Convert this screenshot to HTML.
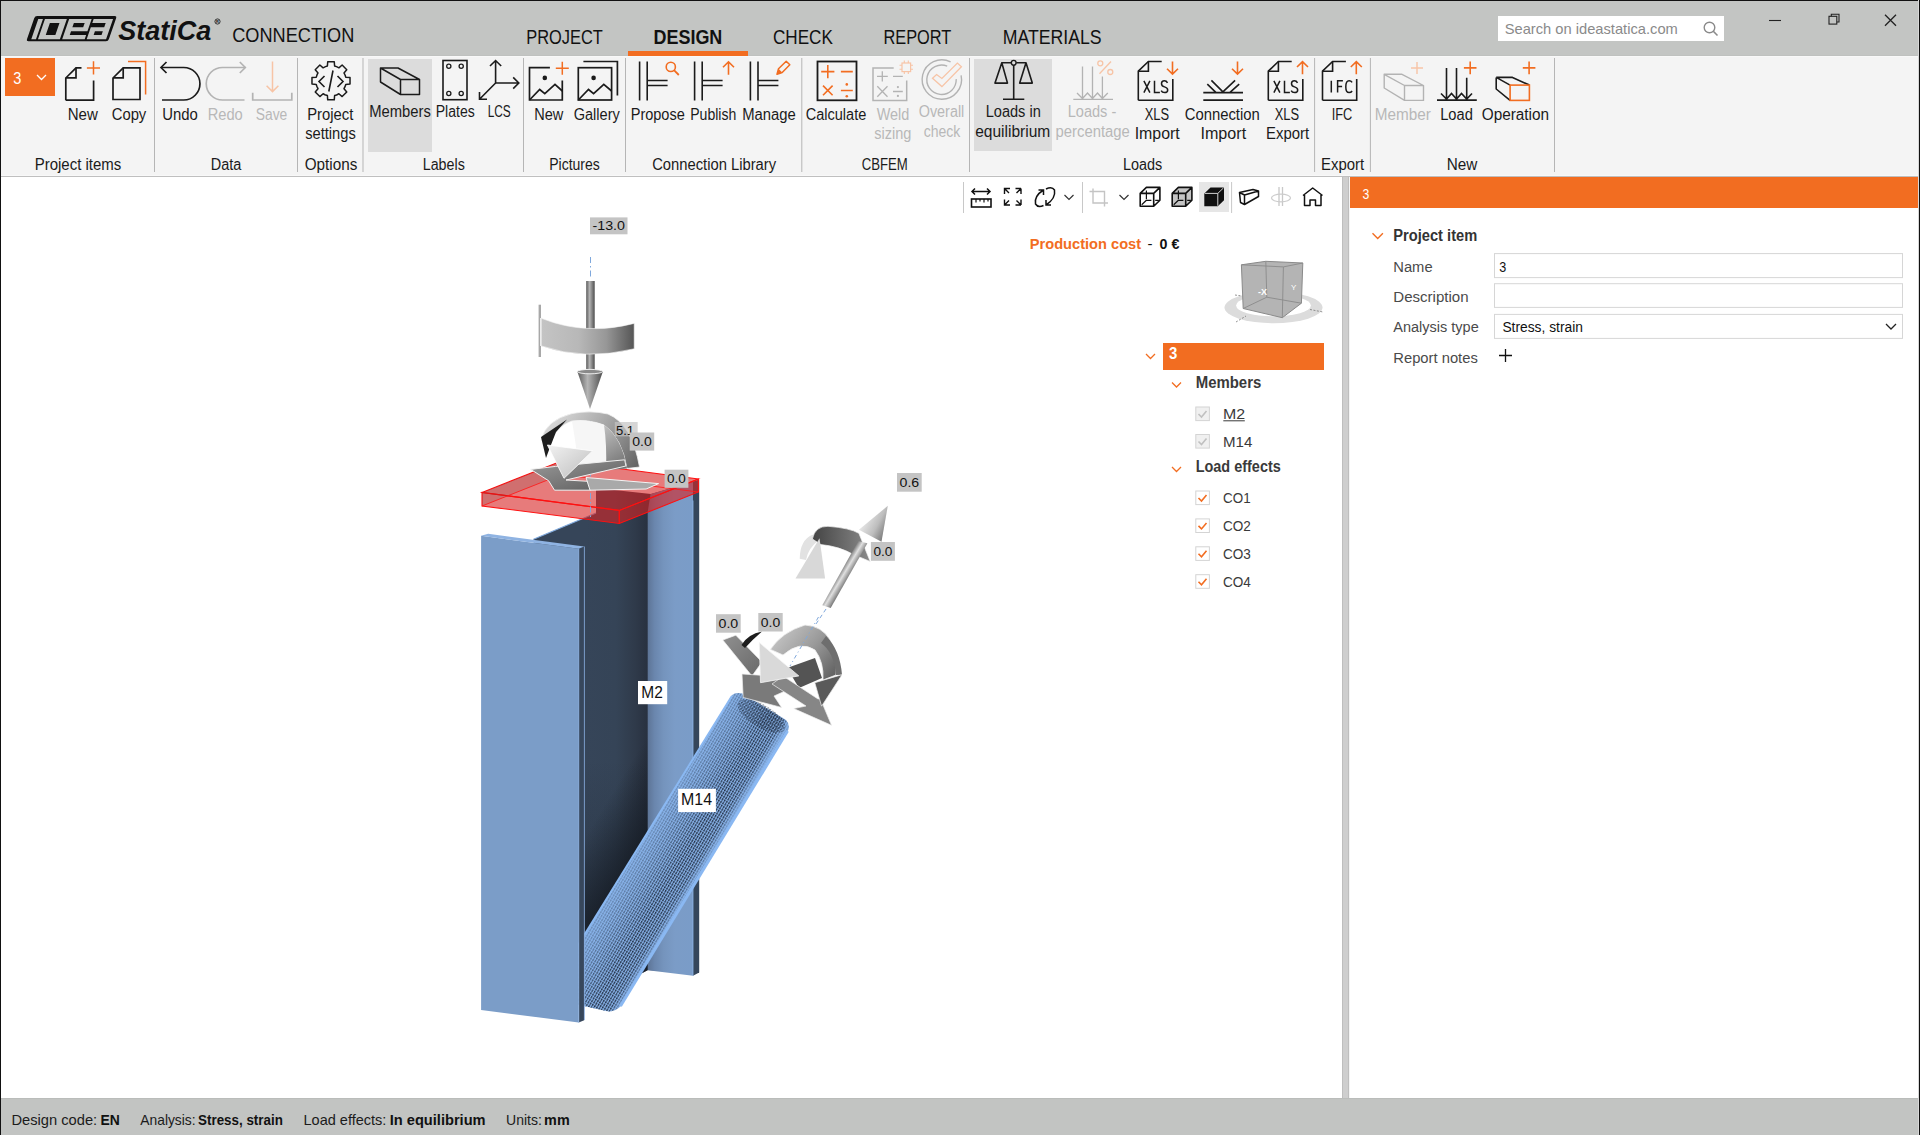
<!DOCTYPE html>
<html><head><meta charset="utf-8"><title>IDEA StatiCa Connection</title>
<style>
html,body{margin:0;padding:0;width:1920px;height:1135px;overflow:hidden;background:#fff}
svg{display:block;font-family:"Liberation Sans", sans-serif}
</style></head><body>
<svg width="1920" height="1135" viewBox="0 0 1920 1135">
<rect x="0" y="0" width="1920" height="1135" fill="#ffffff" />
<rect x="0" y="0" width="1920" height="56" fill="#c3c5c3" />
<rect x="0" y="55" width="1920" height="1" fill="#bfc1bf" />
<rect x="0" y="56" width="1920" height="1" fill="#f8f8f8" />
<rect x="0" y="57" width="1920" height="118" fill="#f4f4f4" />
<rect x="0" y="175" width="1920" height="1" fill="#f8f8f8" />
<rect x="0" y="176" width="1920" height="1" fill="#bfbfbf" />
<rect x="1342" y="177" width="1" height="921" fill="#bebebe" />
<rect x="1343" y="177" width="5" height="921" fill="#cecece" />
<rect x="1348" y="177" width="1" height="921" fill="#bebebe" />
<rect x="1349" y="177" width="1" height="921" fill="#f4f4f4" />
<rect x="0" y="1098" width="1920" height="37" fill="#c2c4c2" />
<rect x="0" y="1098" width="1920" height="1" fill="#babcba" />
<g transform="translate(14.17,0) skewX(-19)"><rect x="26.3" y="16" width="81.9" height="25.2" rx="2.2" fill="#111"/><path fill="#c3c5c3" fill-rule="evenodd" d="M30.6,18.9 H35.3 V39.2 H30.6 Z M37.3,18.9 H59.2 V39.2 H37.3 Z M43.6,22.9 V34.9 H53.2 V22.9 Z M61.5,18.9 H84 V31.2 H67.6 V34.9 H84 V39.2 H61.5 Z M67.6,22.9 V27.3 H78.4 V22.9 Z M86,18.9 H105.4 V39.2 H86 V27.2 H99.4 V22.9 H86 Z M91.5,31.2 V34.9 H99.4 V31.2 Z"/></g>
<text x="118.2" y="39.5" font-size="27" font-weight="bold" fill="#111" textLength="93.1" lengthAdjust="spacingAndGlyphs" font-style="italic">StatiCa</text>
<circle cx="217.5" cy="21.5" r="2.6" fill="none" stroke="#111" stroke-width="0.8"/>
<text x="216.1" y="23.2" font-size="4" fill="#111" font-weight="bold">R</text>
<text x="232.2" y="41.5" font-size="20" font-weight="normal" fill="#111" textLength="122.1" lengthAdjust="spacingAndGlyphs" >CONNECTION</text>
<text x="526.2" y="44.0" font-size="20" font-weight="normal" fill="#111" textLength="76.6" lengthAdjust="spacingAndGlyphs" >PROJECT</text>
<text x="653.5" y="44.0" font-size="20" font-weight="bold" fill="#111" textLength="68.8" lengthAdjust="spacingAndGlyphs" >DESIGN</text>
<text x="773.0" y="44.0" font-size="20" font-weight="normal" fill="#111" textLength="59.8" lengthAdjust="spacingAndGlyphs" >CHECK</text>
<text x="883.5" y="44.0" font-size="20" font-weight="normal" fill="#111" textLength="67.8" lengthAdjust="spacingAndGlyphs" >REPORT</text>
<text x="1002.7" y="44.0" font-size="20" font-weight="normal" fill="#111" textLength="98.9" lengthAdjust="spacingAndGlyphs" >MATERIALS</text>
<rect x="628" y="51" width="120" height="5" fill="#f26d21" />
<rect x="1498" y="16" width="226" height="25" fill="#ffffff" />
<text x="1504.7" y="33.5" font-size="15" font-weight="normal" fill="#8a8a8a" textLength="173.1" lengthAdjust="spacingAndGlyphs" >Search on ideastatica.com</text>
<circle cx="1709.5" cy="27.5" r="5.3" fill="none" stroke="#8a8a8a" stroke-width="1.4"/>
<line x1="1713.3" y1="31.3" x2="1717.5" y2="35.5" stroke="#8a8a8a" stroke-width="1.6"/>
<line x1="1769" y1="20.5" x2="1781" y2="20.5" stroke="#222" stroke-width="1.1"/>
<rect x="1829" y="16.3" width="7.8" height="7.8" fill="none" stroke="#222" stroke-width="1.1"/>
<path d="M1831.3,16.3 V14.3 H1839 V22 H1836.8" fill="none" stroke="#222" stroke-width="1.1"/>
<path d="M1885,14.8 L1896,25.8 M1896,14.8 L1885,25.8" stroke="#222" stroke-width="1.3"/>
<text x="11.4" y="1124.7" font-size="15" font-weight="normal" fill="#1b1b1b" textLength="85.8" lengthAdjust="spacingAndGlyphs" >Design code:</text>
<text x="100.5" y="1124.7" font-size="15" font-weight="bold" fill="#111" textLength="19.3" lengthAdjust="spacingAndGlyphs" >EN</text>
<text x="140.3" y="1124.7" font-size="15" font-weight="normal" fill="#1b1b1b" textLength="55.3" lengthAdjust="spacingAndGlyphs" >Analysis:</text>
<text x="198.1" y="1124.7" font-size="15" font-weight="bold" fill="#111" textLength="84.7" lengthAdjust="spacingAndGlyphs" >Stress, strain</text>
<text x="303.5" y="1124.7" font-size="15" font-weight="normal" fill="#1b1b1b" textLength="82.9" lengthAdjust="spacingAndGlyphs" >Load effects:</text>
<text x="389.7" y="1124.7" font-size="15" font-weight="bold" fill="#111" textLength="95.9" lengthAdjust="spacingAndGlyphs" >In equilibrium</text>
<text x="506.1" y="1124.7" font-size="15" font-weight="normal" fill="#1b1b1b" textLength="35.8" lengthAdjust="spacingAndGlyphs" >Units:</text>
<text x="544.1" y="1124.7" font-size="15" font-weight="bold" fill="#111" textLength="25.6" lengthAdjust="spacingAndGlyphs" >mm</text>
<rect x="5" y="58" width="50" height="38" fill="#f26d21" />
<text x="13.2" y="83.5" font-size="16" font-weight="normal" fill="#ffffff" textLength="8.1" lengthAdjust="spacingAndGlyphs" >3</text>
<path d="M37,75 L41.5,79.5 L46,75" stroke="#ffffff" stroke-width="1.3" fill="none" />
<rect x="368" y="59" width="64" height="93" fill="#dcdcdc" />
<rect x="974" y="59" width="78" height="92" fill="#dcdcdc" />
<line x1="154.5" y1="58" x2="154.5" y2="172" stroke="#b5b5b5" stroke-width="1"/>
<line x1="297.5" y1="58" x2="297.5" y2="172" stroke="#b5b5b5" stroke-width="1"/>
<line x1="363" y1="58" x2="363" y2="172" stroke="#b5b5b5" stroke-width="1"/>
<line x1="523.5" y1="58" x2="523.5" y2="172" stroke="#b5b5b5" stroke-width="1"/>
<line x1="625.5" y1="58" x2="625.5" y2="172" stroke="#b5b5b5" stroke-width="1"/>
<line x1="801.8" y1="58" x2="801.8" y2="172" stroke="#b5b5b5" stroke-width="1"/>
<line x1="969.5" y1="58" x2="969.5" y2="172" stroke="#b5b5b5" stroke-width="1"/>
<line x1="1314.6" y1="58" x2="1314.6" y2="172" stroke="#b5b5b5" stroke-width="1"/>
<line x1="1370.4" y1="58" x2="1370.4" y2="172" stroke="#b5b5b5" stroke-width="1"/>
<line x1="1554.5" y1="58" x2="1554.5" y2="172" stroke="#b5b5b5" stroke-width="1"/>
<text x="34.7" y="170.2" font-size="16" font-weight="normal" fill="#1b1b1b" textLength="86.6" lengthAdjust="spacingAndGlyphs" >Project items</text>
<text x="210.7" y="170.2" font-size="16" font-weight="normal" fill="#1b1b1b" textLength="30.6" lengthAdjust="spacingAndGlyphs" >Data</text>
<text x="304.7" y="170.2" font-size="16" font-weight="normal" fill="#1b1b1b" textLength="52.6" lengthAdjust="spacingAndGlyphs" >Options</text>
<text x="422.7" y="170.2" font-size="16" font-weight="normal" fill="#1b1b1b" textLength="42.1" lengthAdjust="spacingAndGlyphs" >Labels</text>
<text x="549.2" y="170.2" font-size="16" font-weight="normal" fill="#1b1b1b" textLength="50.6" lengthAdjust="spacingAndGlyphs" >Pictures</text>
<text x="652.2" y="170.2" font-size="16" font-weight="normal" fill="#1b1b1b" textLength="123.9" lengthAdjust="spacingAndGlyphs" >Connection Library</text>
<text x="861.7" y="170.2" font-size="16" font-weight="normal" fill="#1b1b1b" textLength="46.1" lengthAdjust="spacingAndGlyphs" >CBFEM</text>
<text x="1123.0" y="170.2" font-size="16" font-weight="normal" fill="#1b1b1b" textLength="39.3" lengthAdjust="spacingAndGlyphs" >Loads</text>
<text x="1321.0" y="170.2" font-size="16" font-weight="normal" fill="#1b1b1b" textLength="43.1" lengthAdjust="spacingAndGlyphs" >Export</text>
<text x="1446.7" y="170.2" font-size="16" font-weight="normal" fill="#1b1b1b" textLength="30.6" lengthAdjust="spacingAndGlyphs" >New</text>
<text x="67.7" y="119.5" font-size="16" font-weight="normal" fill="#1b1b1b" textLength="30.1" lengthAdjust="spacingAndGlyphs" >New</text>
<text x="111.7" y="119.5" font-size="16" font-weight="normal" fill="#1b1b1b" textLength="34.6" lengthAdjust="spacingAndGlyphs" >Copy</text>
<text x="162.2" y="119.5" font-size="16" font-weight="normal" fill="#1b1b1b" textLength="35.6" lengthAdjust="spacingAndGlyphs" >Undo</text>
<text x="207.7" y="119.5" font-size="16" font-weight="normal" fill="#b8b8b8" textLength="35.1" lengthAdjust="spacingAndGlyphs" >Redo</text>
<text x="255.7" y="119.5" font-size="16" font-weight="normal" fill="#b8b8b8" textLength="31.6" lengthAdjust="spacingAndGlyphs" >Save</text>
<text x="307.2" y="119.5" font-size="16" font-weight="normal" fill="#1b1b1b" textLength="46.1" lengthAdjust="spacingAndGlyphs" >Project</text>
<text x="305.2" y="139.2" font-size="16" font-weight="normal" fill="#1b1b1b" textLength="50.6" lengthAdjust="spacingAndGlyphs" >settings</text>
<text x="369.2" y="117.2" font-size="16" font-weight="normal" fill="#1b1b1b" textLength="61.6" lengthAdjust="spacingAndGlyphs" >Members</text>
<text x="435.7" y="117.2" font-size="16" font-weight="normal" fill="#1b1b1b" textLength="39.1" lengthAdjust="spacingAndGlyphs" >Plates</text>
<text x="487.7" y="117.2" font-size="16" font-weight="normal" fill="#1b1b1b" textLength="23.1" lengthAdjust="spacingAndGlyphs" >LCS</text>
<text x="534.2" y="119.5" font-size="16" font-weight="normal" fill="#1b1b1b" textLength="29.1" lengthAdjust="spacingAndGlyphs" >New</text>
<text x="573.7" y="119.5" font-size="16" font-weight="normal" fill="#1b1b1b" textLength="46.1" lengthAdjust="spacingAndGlyphs" >Gallery</text>
<text x="630.7" y="119.5" font-size="16" font-weight="normal" fill="#1b1b1b" textLength="54.1" lengthAdjust="spacingAndGlyphs" >Propose</text>
<text x="690.2" y="119.5" font-size="16" font-weight="normal" fill="#1b1b1b" textLength="46.1" lengthAdjust="spacingAndGlyphs" >Publish</text>
<text x="742.2" y="119.5" font-size="16" font-weight="normal" fill="#1b1b1b" textLength="53.6" lengthAdjust="spacingAndGlyphs" >Manage</text>
<text x="805.7" y="119.5" font-size="16" font-weight="normal" fill="#1b1b1b" textLength="60.6" lengthAdjust="spacingAndGlyphs" >Calculate</text>
<text x="876.7" y="119.5" font-size="16" font-weight="normal" fill="#b8b8b8" textLength="32.6" lengthAdjust="spacingAndGlyphs" >Weld</text>
<text x="874.2" y="139.2" font-size="16" font-weight="normal" fill="#b8b8b8" textLength="37.1" lengthAdjust="spacingAndGlyphs" >sizing</text>
<text x="918.7" y="117.2" font-size="16" font-weight="normal" fill="#b8b8b8" textLength="45.6" lengthAdjust="spacingAndGlyphs" >Overall</text>
<text x="923.7" y="136.5" font-size="16" font-weight="normal" fill="#b8b8b8" textLength="36.6" lengthAdjust="spacingAndGlyphs" >check</text>
<text x="985.7" y="117.2" font-size="16" font-weight="normal" fill="#1b1b1b" textLength="55.1" lengthAdjust="spacingAndGlyphs" >Loads in</text>
<text x="975.2" y="136.5" font-size="16" font-weight="normal" fill="#1b1b1b" textLength="75.1" lengthAdjust="spacingAndGlyphs" >equilibrium</text>
<text x="1067.7" y="117.2" font-size="16" font-weight="normal" fill="#b8b8b8" textLength="48.6" lengthAdjust="spacingAndGlyphs" >Loads -</text>
<text x="1055.5" y="136.5" font-size="16" font-weight="normal" fill="#b8b8b8" textLength="74.3" lengthAdjust="spacingAndGlyphs" >percentage</text>
<text x="1144.7" y="119.5" font-size="16" font-weight="normal" fill="#1b1b1b" textLength="24.4" lengthAdjust="spacingAndGlyphs" >XLS</text>
<text x="1134.7" y="139.2" font-size="16" font-weight="normal" fill="#1b1b1b" textLength="45.1" lengthAdjust="spacingAndGlyphs" >Import</text>
<text x="1184.7" y="119.5" font-size="16" font-weight="normal" fill="#1b1b1b" textLength="75.1" lengthAdjust="spacingAndGlyphs" >Connection</text>
<text x="1200.5" y="139.2" font-size="16" font-weight="normal" fill="#1b1b1b" textLength="45.6" lengthAdjust="spacingAndGlyphs" >Import</text>
<text x="1274.7" y="119.5" font-size="16" font-weight="normal" fill="#1b1b1b" textLength="24.4" lengthAdjust="spacingAndGlyphs" >XLS</text>
<text x="1266.0" y="139.2" font-size="16" font-weight="normal" fill="#1b1b1b" textLength="43.1" lengthAdjust="spacingAndGlyphs" >Export</text>
<text x="1331.7" y="119.5" font-size="16" font-weight="normal" fill="#1b1b1b" textLength="20.6" lengthAdjust="spacingAndGlyphs" >IFC</text>
<text x="1374.7" y="119.5" font-size="16" font-weight="normal" fill="#b8b8b8" textLength="56.1" lengthAdjust="spacingAndGlyphs" >Member</text>
<text x="1440.2" y="119.5" font-size="16" font-weight="normal" fill="#1b1b1b" textLength="32.6" lengthAdjust="spacingAndGlyphs" >Load</text>
<text x="1481.7" y="119.5" font-size="16" font-weight="normal" fill="#1b1b1b" textLength="67.4" lengthAdjust="spacingAndGlyphs" >Operation</text>
<path d="M65.8,100.2 V78 L76,67.8 H81.5" stroke="#1b1b1b" stroke-width="1.7" fill="none" />
<path d="M76,67.8 V77.8 H65.8" stroke="#1b1b1b" stroke-width="1.7" fill="none" />
<path d="M65.8,100.2 H93.6 V80.5" stroke="#1b1b1b" stroke-width="1.7" fill="none" />
<path d="M93.5,61.3 V74.5 M86.9,68 H100" stroke="#f26d21" stroke-width="1.5" fill="none" />
<path d="M113,99.5 V78 L123.2,67.8 H140 V99.5 Z" stroke="#1b1b1b" stroke-width="1.7" fill="none" />
<path d="M123.2,67.8 V77.8 H113" stroke="#1b1b1b" stroke-width="1.7" fill="none" />
<path d="M128,61.5 H145.6 V94.5" stroke="#f26d21" stroke-width="1.5" fill="none" />
<path d="M161,67.5 H183.7 A16.2,16.2 0 0 1 183.7,100 H162" stroke="#1b1b1b" stroke-width="1.7" fill="none" />
<path d="M166.5,62 L161,67.5 L166.5,73" stroke="#1b1b1b" stroke-width="1.7" fill="none" />
<path d="M245.3,67.5 H222.5 A16.2,16.2 0 0 0 222.5,100 H244.5" stroke="#b3b3b3" stroke-width="1.7" fill="none" />
<path d="M239.8,62 L245.3,67.5 L239.8,73" stroke="#b3b3b3" stroke-width="1.7" fill="none" />
<path d="M252.7,92.8 V100 H291.8 V92.8" stroke="#b3b3b3" stroke-width="1.7" fill="none" />
<path d="M272.5,61.6 V91.4 M266.6,85.8 L272.5,91.6 L278.4,85.8" stroke="#f7c4a6" stroke-width="1.5" fill="none" />
<path d="M325.47,66.64 L327.39,66.04 L327.73,61.78 L334.27,61.78 L334.61,66.04 L337.10,66.88 L338.89,67.81 L342.14,65.04 L346.76,69.66 L343.99,72.91 L345.16,75.27 L345.76,77.19 L350.02,77.53 L350.02,84.07 L345.76,84.41 L344.92,86.90 L343.99,88.69 L346.76,91.94 L342.14,96.56 L338.89,93.79 L336.53,94.96 L334.61,95.56 L334.27,99.82 L327.73,99.82 L327.39,95.56 L324.90,94.72 L323.11,93.79 L319.86,96.56 L315.24,91.94 L318.01,88.69 L316.84,86.33 L316.24,84.41 L311.98,84.07 L311.98,77.53 L316.24,77.19 L317.08,74.70 L318.01,72.91 L315.24,69.66 L319.86,65.04 L323.11,67.81 Z" stroke="#1b1b1b" stroke-width="1.5" fill="none" stroke-linejoin="round"/>
<path d="M324.5,76 L319,81.5 L324.5,87 M337.5,76 L343,81.5 L337.5,87 M333,70.5 L328.8,91.5" stroke="#1b1b1b" stroke-width="1.6" fill="none" />
<path d="M380.5,68 H398 L419.5,79.5 V94.5 H400.5 L380.5,82 Z M380.5,68 L400.5,79.5 H419.5 M400.5,79.5 V94.5" stroke="#1b1b1b" stroke-width="1.5" fill="none" stroke-linejoin="round"/>
<rect x="443" y="60.5" width="24" height="39.2" fill="none" stroke="#1b1b1b" stroke-width="1.6"/>
<circle cx="448.8" cy="66.3" r="2.1" fill="none" stroke="#1b1b1b" stroke-width="1.3"/>
<circle cx="461.2" cy="66.3" r="2.1" fill="none" stroke="#1b1b1b" stroke-width="1.3"/>
<circle cx="448.8" cy="93.5" r="2.1" fill="none" stroke="#1b1b1b" stroke-width="1.3"/>
<circle cx="461.2" cy="93.5" r="2.1" fill="none" stroke="#1b1b1b" stroke-width="1.3"/>
<path d="M495.6,83 V60.5 M490,66 L495.6,60.5 L501.2,66 M495.6,83 H518.8 M513.2,77.4 L518.8,83 L513.2,88.6 M495.6,83 L479.5,99.3 M479.5,92 V99.3 H487" stroke="#1b1b1b" stroke-width="1.6" fill="none" />
<path d="M549.9,67.7 H529.5 V100 H562.3 V80.5" stroke="#1b1b1b" stroke-width="1.7" fill="none" />
<path d="M529.5,100 L539.7,89.5 L544.8,93.7 L555,84.4 L562.3,91" stroke="#1b1b1b" stroke-width="1.7" fill="none" />
<circle cx="544.8" cy="77.9" r="2.3" fill="#1b1b1b"/>
<path d="M562.3,61.8 V74.8 M555.8,68.3 H568.8" stroke="#f26d21" stroke-width="1.5" fill="none" />
<rect x="578.3" y="67.7" width="33.3" height="32.3" fill="none" stroke="#1b1b1b" stroke-width="1.7"/>
<path d="M578.3,100 L588.5,89.5 L593.6,93.7 L603.8,84.4 L611.6,91" stroke="#1b1b1b" stroke-width="1.7" fill="none" />
<circle cx="593.6" cy="77.9" r="2.3" fill="#1b1b1b"/>
<path d="M583.4,61.5 H617.4 V95.4" stroke="#1b1b1b" stroke-width="1.7" fill="none" />
<path d="M639.6,61.5 V100.5 M647.2,61.5 V100.5 M647.2,80.5 H667.6 M647.2,85.5 H667.6" stroke="#1b1b1b" stroke-width="1.6" fill="none" />
<path d="M694.6,61.5 V100.5 M702.2,61.5 V100.5 M702.2,80.5 H722.6 M702.2,85.5 H722.6" stroke="#1b1b1b" stroke-width="1.6" fill="none" />
<path d="M750.4,61.5 V100.5 M758.0,61.5 V100.5 M758.0,80.5 H778.4 M758.0,85.5 H778.4" stroke="#1b1b1b" stroke-width="1.6" fill="none" />
<circle cx="670.8" cy="66.9" r="4.6" fill="none" stroke="#f26d21" stroke-width="1.6"/>
<path d="M674,70.2 L678.8,75" stroke="#f26d21" stroke-width="1.8" fill="none" />
<path d="M728.5,61.8 V74.8 M723,67.3 L728.5,61.8 L734,67.3" stroke="#f26d21" stroke-width="1.6" fill="none" />
<path d="M777,74.3 L778.5,68.8 L786.2,61.2 L789.8,64.8 L782.2,72.5 Z" stroke="#f26d21" stroke-width="1.5" fill="none" stroke-linejoin="round"/>
<path d="M777,74.3 L778.5,68.8 L782.5,72.8 Z" fill="#f26d21"/>
<rect x="817.5" y="61.5" width="39" height="38.8" fill="none" stroke="#1b1b1b" stroke-width="1.8"/>
<path d="M827.8,65 V78.2 M821.2,71.6 H834.4 M840.9,71.6 H852.8 M823,85.6 L832.6,95.2 M832.6,85.6 L823,95.2 M840.9,90.5 H852.8" stroke="#f26d21" stroke-width="1.6" fill="none" />
<circle cx="846.8" cy="84.4" r="1.3" fill="#f26d21"/><circle cx="846.8" cy="96.3" r="1.3" fill="#f26d21"/>
<path d="M893.7,67.9 H873 V100.4 H906.7 V80.4" stroke="#b3b3b3" stroke-width="1.5" fill="none" />
<path d="M882.3,71.3 V81.6 M877,76.3 H887.8 M893,76.3 H902.8 M877.3,86.3 L887.5,96.8 M887.5,86.3 L877.3,96.8 M893,91.5 H902.8" stroke="#b3b3b3" stroke-width="1.3" fill="none" />
<circle cx="897.9" cy="87.1" r="1.1" fill="#b3b3b3"/><circle cx="897.9" cy="95.9" r="1.1" fill="#b3b3b3"/>
<rect x="902" y="63" width="8.6" height="8.6" fill="none" stroke="#f7c4a6" stroke-width="1.2"/>
<path d="M904.3,60.5 V63 M908.3,60.5 V63 M904.3,71.6 V74 M908.3,71.6 V74 M899.5,65.3 H902 M899.5,69.3 H902 M910.6,65.3 H913 M910.6,69.3 H913" stroke="#f7c4a6" stroke-width="1.1" fill="none" />
<path d="M950.6,61.9 A19.7,19.7 0 1 0 961.1,75.4" stroke="#b3b3b3" stroke-width="1.4" fill="none" />
<path d="M947.2,66.2 A14.7,14.7 0 1 0 956.2,79.1" stroke="#b3b3b3" stroke-width="1.4" fill="none" />
<path d="M932.5,78.3 L941.9,86.6 L961.4,66.7 L957.4,63.1 L941.9,78.5 L936.6,74.6 Z" stroke="#f7c4a6" stroke-width="1.3" fill="none" stroke-linejoin="miter"/>
<path d="M1013.7,65 V99.3 M1003,99.3 H1024.3 M1001.8,62.8 H1011.2 M1016.2,62.8 H1026" stroke="#1b1b1b" stroke-width="1.6" fill="none" />
<circle cx="1013.7" cy="62.8" r="2.4" fill="#dcdcdc" stroke="#1b1b1b" stroke-width="1.4"/>
<path d="M1001.8,62.8 L995,83.1 H1007.5 Z M1026,62.8 L1019.7,83.1 H1032.3 Z" stroke="#1b1b1b" stroke-width="1.6" fill="none" stroke-linejoin="round"/>
<path d="M1073.3,99.3 H1113 M1082.5,66.6 V98 M1092.5,66.6 V98 M1102.4,76.6 V98 M1077,93 L1082.5,98.5 L1087.5,93 L1092.5,98.5 L1097.5,93 L1102.4,98.5 L1107.8,93" stroke="#b3b3b3" stroke-width="1.3" fill="none" />
<circle cx="1100.3" cy="63.3" r="2.5" fill="none" stroke="#f7c4a6" stroke-width="1.3"/><circle cx="1110.3" cy="72" r="2.5" fill="none" stroke="#f7c4a6" stroke-width="1.3"/>
<path d="M1111,61.5 L1099.5,73.8" stroke="#f7c4a6" stroke-width="1.3" fill="none" />
<path d="M1138.3,100.3 V71.2 L1148.3999999999999,61.5 H1161.7" stroke="#1b1b1b" stroke-width="1.6" fill="none" />
<path d="M1148.3999999999999,61.5 V71.2 H1138.3" stroke="#1b1b1b" stroke-width="1.6" fill="none" />
<path d="M1138.3,100.3 H1172.8 V79" stroke="#1b1b1b" stroke-width="1.6" fill="none" />
<path d="M1143.8999999999999,80.8 L1149.8999999999999,92.6 M1149.8999999999999,80.8 L1143.8999999999999,92.6 M1154.4999999999998,80.8 V92.6 H1159.8999999999999 M1167.4999999999998,82.8 Q1166.4999999999998,80.8 1164.3999999999999,80.8 Q1161.4999999999998,80.8 1161.4999999999998,83.7 Q1161.4999999999998,86.1 1164.4999999999998,86.89999999999999 Q1167.6999999999998,87.8 1167.6999999999998,90.0 Q1167.6999999999998,92.6 1164.4999999999998,92.6 Q1162.1,92.6 1161.1999999999998,90.6" stroke="#1b1b1b" stroke-width="1.5" fill="none" />
<path d="M1172.5,61.4 V74.1 M1167.0,68.7 L1172.5,74.1 L1178.0,68.7" stroke="#f26d21" stroke-width="1.6" fill="none" />
<path d="M1268.3,100.3 V71.2 L1278.3999999999999,61.5 H1291.7" stroke="#1b1b1b" stroke-width="1.6" fill="none" />
<path d="M1278.3999999999999,61.5 V71.2 H1268.3" stroke="#1b1b1b" stroke-width="1.6" fill="none" />
<path d="M1268.3,100.3 H1302.8 V79" stroke="#1b1b1b" stroke-width="1.6" fill="none" />
<path d="M1273.8999999999999,80.8 L1279.8999999999999,92.6 M1279.8999999999999,80.8 L1273.8999999999999,92.6 M1284.4999999999998,80.8 V92.6 H1289.8999999999999 M1297.4999999999998,82.8 Q1296.4999999999998,80.8 1294.3999999999999,80.8 Q1291.4999999999998,80.8 1291.4999999999998,83.7 Q1291.4999999999998,86.1 1294.4999999999998,86.89999999999999 Q1297.6999999999998,87.8 1297.6999999999998,90.0 Q1297.6999999999998,92.6 1294.4999999999998,92.6 Q1292.1,92.6 1291.1999999999998,90.6" stroke="#1b1b1b" stroke-width="1.5" fill="none" />
<path d="M1302.5,74.3 V61.6 M1297.0,67 L1302.5,61.6 L1308.0,67" stroke="#f26d21" stroke-width="1.6" fill="none" />
<path d="M1322.5,100.3 V71.2 L1332.6,61.5 H1345.9" stroke="#1b1b1b" stroke-width="1.6" fill="none" />
<path d="M1332.6,61.5 V71.2 H1322.5" stroke="#1b1b1b" stroke-width="1.6" fill="none" />
<path d="M1322.5,100.3 H1356.7 V79" stroke="#1b1b1b" stroke-width="1.6" fill="none" />
<path d="M1331.3,80.8 V92.6 M1337.6,92.6 V80.8 H1342.8999999999999 M1337.6,86.6 H1342.1 M1352.1,82.39999999999999 Q1351.1,80.8 1349.1,80.8 Q1345.8,80.8 1345.8,87.0 Q1345.8,92.6 1349.1,92.6 Q1351.1,92.6 1352.1,91.0" stroke="#1b1b1b" stroke-width="1.5" fill="none" />
<path d="M1356.3,74.3 V61.6 M1350.8,67 L1356.3,61.6 L1361.8,67" stroke="#f26d21" stroke-width="1.6" fill="none" />
<path d="M1203.3,92.6 H1243 M1203.3,100.1 H1243 M1207.3,84.2 L1216.1,92.6 M1211.4,80.4 L1222.9,91.9 L1235.1,80.4 M1229.7,92.6 L1239.2,84.2" stroke="#1b1b1b" stroke-width="1.6" fill="none" />
<path d="M1237.5,61.4 V74.1 M1232,68.7 L1237.5,74.1 L1243,68.7" stroke="#f26d21" stroke-width="1.6" fill="none" />
<path d="M1384.2,74.3 H1402 L1423.5,85.5 V100.4 H1404.5 L1384.2,88 Z M1384.2,74.3 L1404.5,85.5 H1423.5 M1404.5,85.5 V100.4" stroke="#b3b3b3" stroke-width="1.4" fill="none" stroke-linejoin="round"/>
<path d="M1417,62 V74 M1411,68 H1423" stroke="#f7c4a6" stroke-width="1.4" fill="none" />
<path d="M1437,100.1 H1476.8 M1446.5,67.9 V98.5 M1456.5,67.9 V98.5 M1466.7,77.7 V98.5 M1441,93.5 L1446.5,99 L1451.5,93.5 L1456.5,99 L1461.5,93.5 L1466.7,99 L1472,93.5" stroke="#1b1b1b" stroke-width="1.6" fill="none" />
<path d="M1470.2,61.6 V74.3 M1463.9,67.9 H1476.5" stroke="#f26d21" stroke-width="1.6" fill="none" />
<path d="M1496.2,77.4 H1512.5 L1529.4,85.1 M1496.2,77.4 V89 L1510.1,100.4 M1496.2,77.4 L1510.1,85.1" stroke="#1b1b1b" stroke-width="1.6" fill="none" stroke-linejoin="round"/>
<rect x="1510.1" y="85.1" width="19.3" height="15.3" fill="none" stroke="#f26d21" stroke-width="1.6"/>
<path d="M1529.1,61.6 V74.3 M1522.8,67.9 H1535.4" stroke="#f26d21" stroke-width="1.6" fill="none" />
<line x1="963.5" y1="182" x2="963.5" y2="213" stroke="#c8c8c8" stroke-width="1"/>
<line x1="1082.5" y1="182" x2="1082.5" y2="213" stroke="#c8c8c8" stroke-width="1"/>
<line x1="1231.6" y1="182" x2="1231.6" y2="213" stroke="#c8c8c8" stroke-width="1"/>
<rect x="1199" y="182" width="30" height="30" fill="#e6e6e6" />
<path d="M972,191.5 H990 M975,188.5 L972,191.5 L975,194.5 M987,188.5 L990,191.5 L987,194.5" stroke="#111" stroke-width="1.5" fill="none" />
<rect x="971.5" y="199" width="19.5" height="8" fill="none" stroke="#111" stroke-width="1.6"/>
<path d="M976,199 V202.5 M980,199 V201.5 M984,199 V202.5 M988,199 V201.5" stroke="#111" stroke-width="1.2" fill="none" />
<path d="M1004.5,194 V188.5 H1010 M1004.5,188.5 L1009,193 M1021,188.5 H1015.5 M1021,188.5 V194 M1021,188.5 L1016.5,193 M1004.5,199.5 V205 H1010 M1004.5,205 L1009,200.5 M1021,205 H1015.5 M1021,205 V199.5 M1021,205 L1016.5,200.5" stroke="#111" stroke-width="1.4" fill="none" />
<path d="M1043.5,190 Q1034,196 1035.5,204 Q1038,208 1043.5,205.5 M1038.5,190 H1043.5 V195" stroke="#111" stroke-width="1.5" fill="none" />
<path d="M1046,205 Q1056,198.5 1054.5,190 Q1052,186 1046,189 M1051,205 H1046 V200" stroke="#111" stroke-width="1.5" fill="none" />
<path d="M1064.5,195 L1069,199.5 L1073.5,195" stroke="#333" stroke-width="1.2" fill="none" />
<path d="M1089.5,191.5 H1104.5 V206.5 M1093,188.5 V203 H1108" stroke="#c4c4c4" stroke-width="1.4" fill="none" />
<path d="M1119.5,195 L1124,199.5 L1128.5,195" stroke="#333" stroke-width="1.2" fill="none" />
<path d="M1140.2,193.4 L1146.4,187.4 H1159.9 V200.3 L1153.7,206.3 H1140.2 Z M1140.2,193.4 H1153.7 V206.3 M1153.7,193.4 L1159.9,187.4" stroke="#111" stroke-width="1.6" fill="none" stroke-linejoin="round"/>
<path d="M1146.4,190.4 V199.3 M1146.4,200.3 H1151.4 M1155.2,200.3 H1158.9 M1146.4,200.3 L1141.7,204.8" stroke="#111" stroke-width="1.2" fill="none" />
<path d="M1172.2,193.4 L1178.4,187.4 H1191.9 V200.3 L1185.7,206.3 H1172.2 Z" fill="#c4c4c4"/>
<path d="M1172.2,193.4 L1178.4,187.4 H1191.9 V200.3 L1185.7,206.3 H1172.2 Z M1172.2,193.4 H1185.7 V206.3 M1185.7,193.4 L1191.9,187.4" stroke="#111" stroke-width="1.6" fill="none" stroke-linejoin="round"/>
<path d="M1178.4,190.4 V199.3 M1178.4,200.3 H1183.4 M1187.2,200.3 H1190.9 M1178.4,200.3 L1173.7,204.8" stroke="#111" stroke-width="1.2" fill="none" />
<path d="M1204.3,193.4 L1210.5,187.4 H1224.0 V200.3 L1217.8,206.3 H1204.3 Z" fill="#111"/>
<path d="M1204.8,193.4 H1217.8 V205.8 M1217.8,193.4 L1223.5,187.9" stroke="#e6e6e6" stroke-width="0.9" fill="none" />
<path d="M1239.5,192.5 L1253,189.5 L1258.5,191 V196.5 L1244.5,204.5 L1240.5,202.5 Z M1239.5,192.5 L1244.5,195 L1258.5,191 M1244.5,195 V204.5" stroke="#111" stroke-width="1.5" fill="none" stroke-linejoin="round"/>
<path d="M1279,187 V206 M1282.5,187 V206" stroke="#c8c8c8" stroke-width="1.3" fill="none" />
<ellipse cx="1281" cy="198" rx="9.5" ry="3.8" fill="none" stroke="#cccccc" stroke-width="1.2"/>
<path d="M1303,195.5 L1312.7,188 L1322.5,195.5 M1304.5,194 V205.5 H1310 V200 H1315.5 V205.5 H1321 V194" stroke="#111" stroke-width="1.5" fill="none" stroke-linejoin="round"/>
<text x="1029.8" y="248.8" font-size="15" font-weight="bold" fill="#f26d21" textLength="111.3" lengthAdjust="spacingAndGlyphs" >Production cost</text>
<text x="1147.5" y="248.8" font-size="15" font-weight="normal" fill="#111" textLength="5.0" lengthAdjust="spacingAndGlyphs" >-</text>
<text x="1159.6" y="248.8" font-size="15" font-weight="bold" fill="#111" textLength="19.8" lengthAdjust="spacingAndGlyphs" >0 €</text>
<ellipse cx="1273.5" cy="307.5" rx="49" ry="15.8" fill="#dcdcdc"/>
<ellipse cx="1273.5" cy="305.5" rx="37.4" ry="10.8" fill="#ffffff"/>
<path d="M1241.4,264.8 L1265.8,261.3 L1302.8,263 L1301.4,303.2 L1282.3,317.7 L1243.2,308.5 Z" fill="#b4b4b4" stroke="#8a8a8a" stroke-width="1"/>
<path d="M1241.4,264.8 L1283.4,266.9 L1302.8,263 M1283.4,266.9 L1282.3,317.7 M1265.8,261.3 L1266.8,297.2 L1243.2,308.5 M1266.8,297.2 L1301.4,303.2" fill="none" stroke="#8a8a8a" stroke-width="0.9"/>
<text x="1258" y="295" font-size="9" fill="#ffffff" font-weight="bold">-X</text>
<text x="1291" y="290" font-size="8" fill="#ffffff">Y</text>
<path d="M1235,295 L1242,296 M1236,322 L1246,316 M1310,309.5 L1323,312" stroke="#777" stroke-width="0.8" fill="none" stroke-dasharray="2,1.5"/>
<rect x="1163" y="343" width="161" height="27" fill="#f26d21" />
<path d="M1146,354 L1150.5,358.5 L1155,354" stroke="#f26d21" stroke-width="1.3" fill="none" />
<text x="1169.0" y="359.3" font-size="16" font-weight="bold" fill="#ffffff" textLength="8.3" lengthAdjust="spacingAndGlyphs" >3</text>
<path d="M1172,382.5 L1176.5,387 L1181,382.5" stroke="#f26d21" stroke-width="1.3" fill="none" />
<text x="1195.7" y="388.0" font-size="16" font-weight="bold" fill="#3a3a3a" textLength="65.6" lengthAdjust="spacingAndGlyphs" >Members</text>
<path d="M1172,467 L1176.5,471.5 L1181,467" stroke="#f26d21" stroke-width="1.3" fill="none" />
<text x="1195.7" y="472.2" font-size="16" font-weight="bold" fill="#3a3a3a" textLength="85.1" lengthAdjust="spacingAndGlyphs" >Load effects</text>
<rect x="1195.8" y="407" width="13.6" height="13.6" fill="#f0f0f0" stroke="#d4d4d4" stroke-width="1"/>
<path d="M1198.5,414 L1201.5,417 L1206.5,411" stroke="#c0c0c0" stroke-width="1.6" fill="none" />
<text x="1223.0" y="418.8" font-size="15" font-weight="normal" fill="#3a3a3a" textLength="22.1" lengthAdjust="spacingAndGlyphs" >M2</text>
<line x1="1223.3" y1="420.8" x2="1244.8" y2="420.8" stroke="#3a3a3a" stroke-width="1"/>
<rect x="1195.8" y="434.5" width="13.6" height="13.6" fill="#f0f0f0" stroke="#d4d4d4" stroke-width="1"/>
<path d="M1198.5,441.5 L1201.5,444.5 L1206.5,438.5" stroke="#c0c0c0" stroke-width="1.6" fill="none" />
<text x="1223.0" y="446.8" font-size="15" font-weight="normal" fill="#3a3a3a" textLength="29.3" lengthAdjust="spacingAndGlyphs" >M14</text>
<rect x="1195.8" y="491.0" width="13.6" height="13.6" fill="#ffffff" stroke="#d4d4d4" stroke-width="1"/>
<path d="M1198.5,498.0 L1201.5,501.0 L1206.5,495.0" stroke="#f26d21" stroke-width="1.6" fill="none" />
<text x="1223.0" y="503.0" font-size="15" font-weight="normal" fill="#3a3a3a" textLength="27.6" lengthAdjust="spacingAndGlyphs" >CO1</text>
<rect x="1195.8" y="518.9" width="13.6" height="13.6" fill="#ffffff" stroke="#d4d4d4" stroke-width="1"/>
<path d="M1198.5,525.9 L1201.5,528.9 L1206.5,522.9" stroke="#f26d21" stroke-width="1.6" fill="none" />
<text x="1223.0" y="531.0" font-size="15" font-weight="normal" fill="#3a3a3a" textLength="27.9" lengthAdjust="spacingAndGlyphs" >CO2</text>
<rect x="1195.8" y="546.8" width="13.6" height="13.6" fill="#ffffff" stroke="#d4d4d4" stroke-width="1"/>
<path d="M1198.5,553.8 L1201.5,556.8 L1206.5,550.8" stroke="#f26d21" stroke-width="1.6" fill="none" />
<text x="1223.0" y="559.0" font-size="15" font-weight="normal" fill="#3a3a3a" textLength="27.9" lengthAdjust="spacingAndGlyphs" >CO3</text>
<rect x="1195.8" y="574.7" width="13.6" height="13.6" fill="#ffffff" stroke="#d4d4d4" stroke-width="1"/>
<path d="M1198.5,581.7 L1201.5,584.7 L1206.5,578.7" stroke="#f26d21" stroke-width="1.6" fill="none" />
<text x="1223.0" y="587.0" font-size="15" font-weight="normal" fill="#3a3a3a" textLength="27.9" lengthAdjust="spacingAndGlyphs" >CO4</text>
<defs>
<linearGradient id="gBackFl" gradientUnits="userSpaceOnUse" x1="647.7" x2="693" y1="0" y2="0">
 <stop offset="0" stop-color="#5d7496"/><stop offset="0.15" stop-color="#6a86ad"/><stop offset="0.35" stop-color="#7594bd"/><stop offset="0.6" stop-color="#7b9cc7"/><stop offset="1" stop-color="#7a9cc8"/></linearGradient>
<linearGradient id="gWeb" gradientUnits="userSpaceOnUse" x1="584" x2="648" y1="0" y2="0">
 <stop offset="0" stop-color="#364559"/><stop offset="0.5" stop-color="#354457"/><stop offset="0.8" stop-color="#2f3a4a"/><stop offset="1" stop-color="#283140"/></linearGradient>
<linearGradient id="gTube" x1="0" x2="1" y1="0" y2="0" gradientTransform="rotate(30.5 0.5 0.5)">
 <stop offset="0" stop-color="#7fa6d8"/><stop offset="0.45" stop-color="#6a8fbd"/><stop offset="1" stop-color="#4f6d93"/></linearGradient>
<pattern id="pTube" width="2.5" height="3" patternUnits="userSpaceOnUse" patternTransform="rotate(30.5)">
 <rect width="1.4" height="2.4" fill="#223045"/></pattern>
<linearGradient id="gTubeMask" gradientUnits="userSpaceOnUse" x1="634" y1="860" x2="688" y2="892">
 <stop offset="0" stop-color="#fff" stop-opacity="0.3"/><stop offset="0.3" stop-color="#fff" stop-opacity="0.6"/><stop offset="0.65" stop-color="#fff" stop-opacity="1"/><stop offset="0.9" stop-color="#fff" stop-opacity="0.9"/><stop offset="1" stop-color="#fff" stop-opacity="0.2"/></linearGradient>
<linearGradient id="gShaft" x1="0" x2="1" y1="0" y2="0">
 <stop offset="0" stop-color="#5a5a5a"/><stop offset="0.4" stop-color="#b4b4b4"/><stop offset="1" stop-color="#4e4e4e"/></linearGradient>
<linearGradient id="gBand" x1="0" x2="1" y1="0" y2="0">
 <stop offset="0" stop-color="#c4c4c4"/><stop offset="0.4" stop-color="#b8b8b8"/><stop offset="0.7" stop-color="#979797"/><stop offset="1" stop-color="#555555"/></linearGradient>
<linearGradient id="gGray" x1="0" x2="1" y1="0" y2="1">
 <stop offset="0" stop-color="#9a9a9a"/><stop offset="1" stop-color="#5a5a5a"/></linearGradient>
<linearGradient id="gLight" x1="0" x2="1" y1="0" y2="1">
 <stop offset="0" stop-color="#f2f2f2"/><stop offset="1" stop-color="#bdbdbd"/></linearGradient>
<linearGradient id="gDark" x1="0" x2="1" y1="0" y2="0">
 <stop offset="0" stop-color="#444"/><stop offset="1" stop-color="#8a8a8a"/></linearGradient>
<linearGradient id="gWebShade" gradientUnits="userSpaceOnUse" x1="0" x2="0" y1="760" y2="960">
 <stop offset="0" stop-color="#1a222d" stop-opacity="0"/><stop offset="1" stop-color="#1a222d" stop-opacity="0.45"/></linearGradient>
<linearGradient id="gWebShade2" gradientUnits="userSpaceOnUse" x1="640" y1="843.7" x2="597" y2="817">
 <stop offset="0" stop-color="#161c25" stop-opacity="0.8"/><stop offset="1" stop-color="#161c25" stop-opacity="0"/></linearGradient>
<linearGradient id="gFlShade" x1="0" x2="0" y1="0" y2="1">
 <stop offset="0" stop-color="#222a35" stop-opacity="0"/><stop offset="1" stop-color="#1a2230" stop-opacity="0.55"/></linearGradient>
</defs>
<path d="M533.5,539.3 L596,513 L596,488 L651,494 L699,480 L699,973 L647.7,970 L584,1004 Z" fill="url(#gWeb)"/>
<path d="M584,546 L648,512 L648,970 L584,1004 Z" fill="url(#gWebShade)"/>
<path d="M584,546 L648,512 L648,970 L584,1004 Z" fill="url(#gWebShade2)"/>
<path d="M533.5,539.3 L596,513" stroke="#7fa8dc" stroke-width="1.2"/>
<path d="M650.5,494 L693,482 L693,975.8 L647.7,970.2 L647.7,512 Z" fill="url(#gBackFl)"/>
<path d="M693,482 L699.2,480 L699.2,972.6 L693,975.8 Z" fill="#35465b"/>
<path d="M693,500.5 V975.8" stroke="#8fb6ea" stroke-width="0.8"/>
<path d="M731.9,695.2 Q735,692 742.5,693.4 L786,720 Q790,724 788.3,730 L621,1006 Q614,1013 606,1011 L575,1004 L575,950 Z" fill="#8ab5ec"/>
<mask id="mTube" maskUnits="userSpaceOnUse" x="0" y="0" width="1920" height="1135"><rect x="0" y="0" width="1920" height="1135" fill="url(#gTubeMask)"/></mask>
<path d="M731.9,695.2 Q735,692 742.5,693.4 L786,720 Q790,724 788.3,730 L621,1006 Q614,1013 606,1011 L575,1004 L575,950 Z" fill="url(#pTube)" mask="url(#mTube)"/>
<path d="M787.5,731 L620.5,1006" stroke="#8ab8f2" stroke-width="3" fill="none"/>
<path d="M731.9,696 L575,950" stroke="#8ab8f2" stroke-width="2" fill="none"/>
<ellipse cx="761.5" cy="716" rx="27" ry="11" transform="rotate(30.5 761.5 716)" fill="url(#pTube)" opacity="0.6"/>
<path d="M481.1,535.8 L578.7,548.8 L578.7,1022.6 L481.1,1009.9 Z" fill="#7b9dc8"/>
<path d="M578.7,548.8 L584.2,546.5 L584.2,1020.2 L578.7,1022.6 Z" fill="#37475c"/>
<path d="M481.1,535.8 L488.2,533.8 L584.2,546.5 L578.7,548.8 Z" fill="#8fb3e2"/>
<path d="M578.7,548.8 V1022.6" stroke="#95baea" stroke-width="0.9"/>
<path d="M584.4,546.5 V1020" stroke="#8db4e6" stroke-width="0.8"/>
<path d="M482,492.5 L561.5,461 L698.4,479 L619.3,510.4 Z" fill="#d72323" fill-opacity="0.6" stroke="#ff1010" stroke-width="1.1"/>
<path d="M482,492.5 L482,506 L619.3,523.5 L619.3,510.4 Z" fill="#d72323" fill-opacity="0.6" stroke="#ff1010" stroke-width="1.1"/>
<path d="M619.3,510.4 L698.4,479 L698.4,492 L619.3,523.5 Z" fill="#d72323" fill-opacity="0.6" stroke="#ff1010" stroke-width="1.1"/>
<path d="M482,492.5 L561.5,461 L561.5,474.5 L482,506 Z" fill="#5a3030" fill-opacity="0.16"/>
<path d="M482,506 L561.5,474.5 L698.4,492" fill="none" stroke="#ff1a1a" stroke-width="1" stroke-opacity="0.85"/>
<path d="M590.5,257 V279 M590.5,412 V517" stroke="#7fa8dc" stroke-width="1" stroke-dasharray="6,3,1.5,3"/>
<rect x="586.2" y="281" width="8.5" height="90" fill="url(#gShaft)"/>
<path d="M577.4,371.8 L602.8,371.8 L590,409 Z" fill="url(#gShaft)"/>
<ellipse cx="590" cy="371.6" rx="12.6" ry="2.2" fill="#8a8a8a" stroke="#f6f6f6" stroke-width="0.9"/>
<path d="M541.2,318.2 Q585,336 634.2,323.4 L634.2,348.8 Q585,361 541.2,345.9 Z" fill="url(#gBand)" stroke="#f4f4f4" stroke-width="0.6"/>
<path d="M539.8,304.7 V357" stroke="#a8a8a8" stroke-width="2.4"/>
<path d="M540.6,318 V346" stroke="#ececec" stroke-width="1.2"/>
<linearGradient id="gArc" gradientUnits="userSpaceOnUse" x1="560" y1="415" x2="640" y2="470"><stop offset="0" stop-color="#d4d4d4"/><stop offset="0.5" stop-color="#a0a0a0"/><stop offset="1" stop-color="#5e5e5e"/></linearGradient>
<linearGradient id="gArcIn" gradientUnits="userSpaceOnUse" x1="600" y1="425" x2="625" y2="468"><stop offset="0" stop-color="#c4c4c4"/><stop offset="1" stop-color="#707070"/></linearGradient>
<path d="M541,440 Q546,420 572,413.5 Q590,410 608,414 Q632,424 639.5,467 L627,468.5 Q622,438 604,425 Q588,419 572,421 Q556,426 549,446 Z" fill="url(#gArc)" stroke="#f2f2f2" stroke-width="0.8"/>
<path d="M572,421 Q588,419 604,425 Q608,445 606,470 L580,476 Q576,445 572,421 Z" fill="#f6f6f6"/>
<path d="M604,425 Q622,438 627,468.5 L606,470 Q607,445 604,425 Z" fill="url(#gArcIn)"/>
<path d="M541,437 L567,419.5 L556,432 L549,450 L546,458 Z" fill="#1e1e1e"/>
<path d="M530.7,469.4 L555.7,466.4 L624.7,459.8 L625.9,466 L566,480 L600,482 L590,490.2 L554.5,490.2 L548.6,480.7 Z" fill="url(#gGray)" stroke="#f0f0f0" stroke-width="1"/>
<path d="M586,477.5 L658.6,483.6 L646.1,489 L590,490.2 Z" fill="#a9a9a9" stroke="#f4f4f4" stroke-width="1"/>
<path d="M547.4,445 L592.6,450.9 L564,478.3 Z" fill="url(#gLight)" stroke="#ffffff" stroke-width="0.8"/>
<linearGradient id="gLC" gradientUnits="userSpaceOnUse" x1="775" y1="630" x2="835" y2="680"><stop offset="0" stop-color="#c8c8c8"/><stop offset="0.5" stop-color="#9a9a9a"/><stop offset="1" stop-color="#5c5c5c"/></linearGradient>
<linearGradient id="gLS" gradientUnits="userSpaceOnUse" x1="725" y1="640" x2="760" y2="675"><stop offset="0" stop-color="#8c8c8c"/><stop offset="1" stop-color="#6a6a6a"/></linearGradient>
<path d="M722.8,640 L735.8,635.2 L762,662 L752,676 Z" fill="url(#gLS)" stroke="#f0f0f0" stroke-width="0.7"/>
<path d="M741.5,645 Q748,634 762,631.5 Q752,640 745,648 Z" fill="#1e1e1e"/>
<path d="M770.4,649.4 Q782,632 805,625 Q822,626 830,640 Q838,655 836,675 L823,680 Q824,662 815,650 Q800,640 783,655 Z" fill="url(#gLC)" stroke="#f0f0f0" stroke-width="0.8"/>
<path d="M821,643 Q834,652 836,675 L842,674.7 Q840,650 826,636 Z" fill="#6e6e6e"/>
<path d="M787,668 L815,658 L822,678 L799,688 Z" fill="#545454"/>
<path d="M742,674 L743.2,697.5 L781.5,707.4 L774,696 L792,688 L772,676 Z" fill="#7a7a7a" stroke="#eeeeee" stroke-width="0.7"/>
<path d="M772,684 L783,676 L818,699 L820.4,698.8 L831.5,725.3 L793.8,708.6 L806,706 Z" fill="#868686" stroke="#eeeeee" stroke-width="0.7"/>
<path d="M814.8,682.7 L842,674.7 L821.6,706.2 Z" fill="#5a5a5a" stroke="#eeeeee" stroke-width="0.7"/>
<path d="M759.3,642.6 L798.8,675.9 L760.5,682.7 Z" fill="#d9d9d9" stroke="#f4f4f4" stroke-width="0.8"/>
<linearGradient id="gSh2" gradientUnits="userSpaceOnUse" x1="840.5" y1="570.5" x2="850.5" y2="576.5"><stop offset="0" stop-color="#7a7a7a"/><stop offset="0.4" stop-color="#e0e0e0"/><stop offset="1" stop-color="#6a6a6a"/></linearGradient>
<linearGradient id="gCone2" gradientUnits="userSpaceOnUse" x1="858.9" y1="529.8" x2="881.5" y2="541.8"><stop offset="0" stop-color="#e6e6e6"/><stop offset="0.55" stop-color="#bdbdbd"/><stop offset="1" stop-color="#7a7a7a"/></linearGradient>
<path d="M799.7,558.7 Q800,540 812.4,534.7 L819,540 Q808,548 806,560 Z" fill="#e2e2e2"/>
<path d="M812.4,539 Q815,526 828,526.3 Q850,528 858.9,533.3 L870.2,561.5 L853.3,554.4 Q838,546 820.9,544.6 Z" fill="url(#gDark)" stroke="#f4f4f4" stroke-width="0.7"/>
<path d="M819.5,538.2 L825.1,578.4 L795.5,578.4 Z" fill="#d8d8d8"/>
<path d="M822.3,605.2 L830.7,608 L867.4,543.2 L858.2,541 Z" fill="url(#gSh2)"/>
<path d="M858.9,529.8 L881.5,541.8 L887.8,505.8 Z" fill="url(#gCone2)"/>
<path d="M826,609 L816,624" stroke="#7fa8dc" stroke-width="1" stroke-dasharray="4,3"/>
<path d="M818.5,617 L790,666" stroke="#7fa8dc" stroke-width="1" stroke-dasharray="4,3,1,3"/>
<rect x="590" y="217.4" width="37.5" height="16.900000000000006" fill="#c4c4c4"/>
<text x="592.5" y="229.8" font-size="13" fill="#111" textLength="32.5" lengthAdjust="spacingAndGlyphs">-13.0</text>
<rect x="614.8" y="422" width="22.9" height="14.4" fill="#c4c4c4" opacity="0.7"/>
<text x="616" y="434.5" font-size="13" fill="#111">5.1</text>
<rect x="629.7" y="432.5" width="24.5" height="18.100000000000023" fill="#c4c4c4"/>
<text x="632.2" y="446.1" font-size="13" fill="#111" textLength="19.5" lengthAdjust="spacingAndGlyphs">0.0</text>
<rect x="664.6" y="469.7" width="23.799999999999955" height="18.100000000000023" fill="#c4c4c4"/>
<text x="667.1" y="483.3" font-size="13" fill="#111" textLength="18.799999999999955" lengthAdjust="spacingAndGlyphs">0.0</text>
<rect x="897" y="473" width="24.700000000000045" height="18.69999999999999" fill="#c4c4c4"/>
<text x="899.5" y="487.2" font-size="13" fill="#111" textLength="19.700000000000045" lengthAdjust="spacingAndGlyphs">0.6</text>
<rect x="870.9" y="542" width="24.0" height="18.799999999999955" fill="#c4c4c4"/>
<text x="873.4" y="556.3" font-size="13" fill="#111" textLength="19.0" lengthAdjust="spacingAndGlyphs">0.0</text>
<rect x="716" y="614.2" width="24.700000000000045" height="18.5" fill="#c4c4c4"/>
<text x="718.5" y="628.2" font-size="13" fill="#111" textLength="19.700000000000045" lengthAdjust="spacingAndGlyphs">0.0</text>
<rect x="758.3" y="613" width="24.40000000000009" height="18.5" fill="#c4c4c4"/>
<text x="760.8" y="627.0" font-size="13" fill="#111" textLength="19.40000000000009" lengthAdjust="spacingAndGlyphs">0.0</text>
<rect x="638" y="681" width="29.2" height="23.2" fill="#ffffff"/>
<text x="641.3" y="698.2" font-size="16" fill="#111" textLength="21.5" lengthAdjust="spacingAndGlyphs">M2</text>
<rect x="678.1" y="788.8" width="37.8" height="23.3" fill="#ffffff"/>
<text x="681" y="805.3" font-size="16" fill="#111" textLength="31" lengthAdjust="spacingAndGlyphs">M14</text>
<rect x="1350" y="177" width="1568" height="31" fill="#f26d21" />
<text x="1362.5" y="199.0" font-size="15" font-weight="normal" fill="#ffffff" textLength="6.8" lengthAdjust="spacingAndGlyphs" >3</text>
<path d="M1372.5,233.2 L1377.7,238.4 L1382.9,233.2" stroke="#f26d21" stroke-width="1.4" fill="none" />
<text x="1393.3" y="241.3" font-size="16" font-weight="bold" fill="#333" textLength="83.9" lengthAdjust="spacingAndGlyphs" >Project item</text>
<text x="1393.3" y="272.2" font-size="15.5" font-weight="normal" fill="#4a4a4a" textLength="39.3" lengthAdjust="spacingAndGlyphs" >Name</text>
<text x="1393.3" y="302.2" font-size="15.5" font-weight="normal" fill="#4a4a4a" textLength="75.3" lengthAdjust="spacingAndGlyphs" >Description</text>
<text x="1393.3" y="332.2" font-size="15.5" font-weight="normal" fill="#4a4a4a" textLength="85.4" lengthAdjust="spacingAndGlyphs" >Analysis type</text>
<text x="1393.3" y="363.0" font-size="15.5" font-weight="normal" fill="#4a4a4a" textLength="84.5" lengthAdjust="spacingAndGlyphs" >Report notes</text>
<rect x="1494.5" y="253.6" width="408" height="24.00000000000003" fill="#ffffff" stroke="#d6d6d6" stroke-width="1"/>
<rect x="1494.5" y="283.7" width="408" height="23.69999999999999" fill="#ffffff" stroke="#d6d6d6" stroke-width="1"/>
<rect x="1494.5" y="314.4" width="408" height="24.0" fill="#ffffff" stroke="#d6d6d6" stroke-width="1"/>
<text x="1499.3" y="272.2" font-size="15.5" font-weight="normal" fill="#111" textLength="7.0" lengthAdjust="spacingAndGlyphs" >3</text>
<text x="1502.4" y="332.2" font-size="15.5" font-weight="normal" fill="#111" textLength="80.5" lengthAdjust="spacingAndGlyphs" >Stress, strain</text>
<path d="M1886,324 L1891,329 L1896,324" stroke="#222" stroke-width="1.3" fill="none" />
<path d="M1505.5,349 V362 M1499,355.5 H1512" stroke="#111" stroke-width="1.3" fill="none" />
<rect x="0" y="0" width="1920" height="1" fill="#111" />
<rect x="0" y="0" width="1" height="1135" fill="#111" />
<rect x="1918" y="0" width="1" height="1135" fill="#d8d8d8" />
<rect x="1919" y="0" width="1" height="1135" fill="#111" />
</svg>
</body></html>
